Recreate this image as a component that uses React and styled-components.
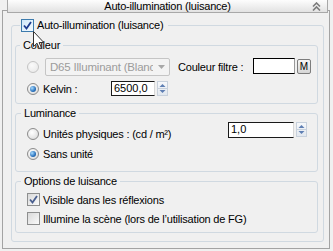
import React from "react";
import styled, { createGlobalStyle } from "styled-components";

const GlobalStyle = createGlobalStyle`
  html, body {
    margin: 0;
    padding: 0;
    background: #f0f0f0;
  }
  body {
    font-family: "Liberation Sans", Arial, sans-serif;
    font-size: 11px;
    letter-spacing: -0.2px;
    color: #000;
  }
`;

const Screen = styled.div`
  position: relative;
  width: 333px;
  height: 251px;
  box-sizing: border-box;
  padding: 10px 0 0 2px;
  overflow: hidden;
`;

const Frame = styled.div`
  width: 328px;
  height: 239px;
  box-sizing: border-box;
  border: 1px solid #a3a3a3;
`;

const Header = styled.div`
  margin: -11px 0 0 4px;
  width: 321px;
  height: 13px;
  box-sizing: border-box;
  display: grid;
  grid-template-columns: 1fr auto 1fr;
  align-items: center;
  background: linear-gradient(#fdfdfd, #e2e2e2);
  border: 1px solid #a8a8a8;
  border-top: none;
  line-height: 12px;
  .chev {
    justify-self: end;
    margin-right: 6px;
    display: flex;
  }
`;

const Group = styled.fieldset`
  margin: ${p => p.$margin};
  padding: 0;
  width: ${p => p.$w}px;
  height: ${p => p.$h}px;
  min-inline-size: 0;
  box-sizing: border-box;
  border: 1px solid #d0d9e1;
  border-radius: 3px;
`;

const Legend = styled.legend`
  margin-left: ${p => p.$ml}px;
  padding: ${p => p.$pad};
  height: 13px;
  line-height: 13px;
  display: flex;
  align-items: center;
  gap: 3px;
`;

const Stack = styled.div`
  display: flex;
  flex-direction: column;
  gap: ${p => p.$gap}px;
  padding: ${p => p.$pad};
`;

const Row = styled.div`
  display: flex;
  align-items: ${p => p.$align || "center"};
  height: ${p => p.$h}px;
`;

const Label = styled.span`
  margin-left: ${p => p.$ml || 0}px;
  width: ${p => (p.$w ? `${p.$w}px` : "auto")};
  flex: none;
  white-space: nowrap;
  align-self: ${p => p.$self || "auto"};
`;

const Radio = styled.span`
  width: 12px;
  height: 12px;
  flex: none;
  box-sizing: border-box;
  border-radius: 50%;
  border: 1px solid ${p => (p.$disabled ? "#c4c4c4" : "#8b8b8b")};
  background: ${p =>
    p.$disabled
      ? "radial-gradient(circle at 40% 35%, #fafafa, #ececec 70%, #e0e0e0)"
      : "radial-gradient(circle at 40% 35%, #ffffff, #e2e2e2 70%, #cfcfcf)"};
  display: flex;
  align-items: center;
  justify-content: center;
  align-self: ${p => p.$self || "auto"};
  &::after {
    content: "";
    display: ${p => (p.$checked ? "block" : "none")};
    width: 6px;
    height: 6px;
    border-radius: 50%;
    background: radial-gradient(circle at 35% 35%, #a8dcff, #2a72bd 60%, #124a86);
  }
`;

const Check = styled.span`
  width: 13px;
  height: 13px;
  flex: none;
  box-sizing: border-box;
  border: 1px solid ${p => (p.$hot ? "#3d7bad" : "#8e8f8f")};
  background: ${p =>
    p.$hot
      ? "linear-gradient(135deg, #cfe7fa, #f4fbff)"
      : "linear-gradient(135deg, #d9d9d9, #fbfbfb)"};
  display: flex;
  align-items: center;
  justify-content: center;
`;

const Select = styled.div`
  margin-left: 6px;
  width: 125px;
  height: 18px;
  flex: none;
  box-sizing: border-box;
  border: 1px solid #c5c5c5;
  border-radius: 2px;
  background: #f3f3f3;
  color: #9c9c9c;
  display: flex;
  align-items: center;
  .txt {
    flex: 1;
    overflow: hidden;
    white-space: nowrap;
    padding-left: 4px;
    font-size: 11.5px;
  }
  .arr {
    width: 16px;
    display: flex;
    justify-content: center;
  }
`;

const Swatch = styled.span`
  margin-left: ${p => p.$ml}px;
  width: 42px;
  height: 16px;
  flex: none;
  box-sizing: border-box;
  background: #fff;
  border: 1px solid #000;
  border-right-color: #9a9a9a;
  align-self: flex-start;
`;

const MapButton = styled.span`
  margin-left: 2px;
  margin-top: 1px;
  width: 14px;
  height: 15px;
  flex: none;
  box-sizing: border-box;
  border: 1px solid #7d7d7d;
  border-radius: 2px;
  background: linear-gradient(#f6f6f6, #d6d6d6);
  font-size: 10px;
  line-height: 13px;
  text-align: center;
  letter-spacing: 0;
  align-self: flex-start;
`;

const NumField = styled.span`
  margin-left: ${p => (p.$auto ? "auto" : `${p.$ml || 0}px`)};
  width: ${p => p.$w}px;
  height: ${p => p.$hh || 15}px;
  flex: none;
  box-sizing: border-box;
  background: #fff;
  border: 1px solid #1a1a1a;
  border-right-color: #d8d8d8;
  padding-left: 2px;
  line-height: 13px;
  letter-spacing: 0;
  align-self: ${p => p.$self || "auto"};
`;

const Spin = styled.span`
  margin-left: 2px;
  width: 11px;
  height: 15px;
  flex: none;
  box-sizing: border-box;
  border: 1px solid #c8d1dc;
  background: linear-gradient(#f6f8fb, #e2e8ef);
  display: flex;
  align-self: ${p => p.$self || "auto"};
`;

const Cursor = styled.svg`
  position: absolute;
  left: 33px;
  top: 31px;
`;

const Chevrons = () => (
  <svg width="9" height="9" viewBox="0 0 9 9">
    <polyline points="1,4.5 4.5,1 8,4.5" fill="none" stroke="#7c7c7c" strokeWidth="1.6" />
    <polyline points="1,8.5 4.5,5 8,8.5" fill="none" stroke="#7c7c7c" strokeWidth="1.6" />
  </svg>
);

const Tick = ({ color }) => (
  <svg width="9" height="9" viewBox="0 0 9 9">
    <path d="M1 4.5 L3.5 7.5 L8 1" fill="none" stroke={color} strokeWidth="1.8" />
  </svg>
);

const SpinArrows = () => (
  <svg width="9" height="13" viewBox="0 0 9 13">
    <path d="M1.5 5 L4.5 2 L7.5 5 Z" fill="#5f7fb3" />
    <line x1="0" y1="6.5" x2="9" y2="6.5" stroke="#c8d1dc" />
    <path d="M1.5 8 L4.5 11 L7.5 8 Z" fill="#5f7fb3" />
  </svg>
);

const Spinner = ({ self }) => (
  <Spin $self={self}>
    <SpinArrows />
  </Spin>
);

export default function App() {
  return (
    <>
      <GlobalStyle />
      <Screen>
        <Frame>
          <Header>
            <span />
            <span>Auto-illumination (luisance)</span>
            <span className="chev">
              <Chevrons />
            </span>
          </Header>

          <Group $margin="6px 0 0 8px" $w={313} $h={223}>
            <Legend $ml={8} $pad="0 5px 0 1px">
              <Check $hot>
                <Tick color="#1d3b8f" />
              </Check>
              Auto-illumination (luisance)
            </Legend>

            <Stack $gap={3} $pad="7px 5px 0 3px">
              <Group $margin="0" $w={303} $h={65}>
                <Legend $ml={4} $pad="0 3px">Couleur</Legend>
                <Stack $gap={5} $pad="6px 0 0 11px">
                  <Row $h={18}>
                    <Radio $disabled />
                    <Select>
                      <span className="txt">D65 Illuminant (Blanc</span>
                      <span className="arr">
                        <svg width="7" height="4" viewBox="0 0 7 4">
                          <path d="M0 0 L7 0 L3.5 4 Z" fill="#a8a8a8" />
                        </svg>
                      </span>
                    </Select>
                    <Label $ml={8} $w={75}>Couleur filtre :</Label>
                    <Swatch $ml={0} />
                    <MapButton>M</MapButton>
                  </Row>
                  <Row $h={15}>
                    <Radio $checked />
                    <Label $ml={4} $w={68}>Kelvin :</Label>
                    <NumField $w={44}>6500,0</NumField>
                    <Spinner />
                  </Row>
                </Stack>
              </Group>

              <Group $margin="0" $w={303} $h={65}>
                <Legend $ml={5} $pad="0 3px">Luminance</Legend>
                <Stack $gap={8} $pad="2px 10px 0 11px">
                  <Row $h={18} $align="flex-start">
                    <Radio $self="flex-end" />
                    <Label $ml={4} $self="flex-end">Unités physiques : (cd / m²)</Label>
                    <NumField $auto $w={66} $hh={16}>1,0</NumField>
                    <Spinner />
                  </Row>
                  <Row $h={12}>
                    <Radio $checked />
                    <Label $ml={4}>Sans unité</Label>
                  </Row>
                </Stack>
              </Group>

              <Group $margin="0" $w={303} $h={58}>
                <Legend $ml={5} $pad="0 3px">Options de luisance</Legend>
                <Stack $gap={6} $pad="5px 0 0 11px">
                  <Row $h={13}>
                    <Check>
                      <Tick color="#4a5f8f" />
                    </Check>
                    <Label $ml={3}>Visible dans les réflexions</Label>
                  </Row>
                  <Row $h={13}>
                    <Check />
                    <Label $ml={3}>Illumine la scène (lors de l’utilisation de FG)</Label>
                  </Row>
                </Stack>
              </Group>
            </Stack>
          </Group>
        </Frame>
        <Cursor width="12" height="19" viewBox="0 0 12 19">
          <path
            d="M0.5 0.5 L0.5 15.5 L4 12.2 L6.4 17.6 L8.4 16.7 L6.1 11.5 L10.8 11.5 Z"
            fill="#fff"
            stroke="#333"
            strokeWidth="1"
            strokeLinejoin="round"
          />
        </Cursor>
      </Screen>
    </>
  );
}
